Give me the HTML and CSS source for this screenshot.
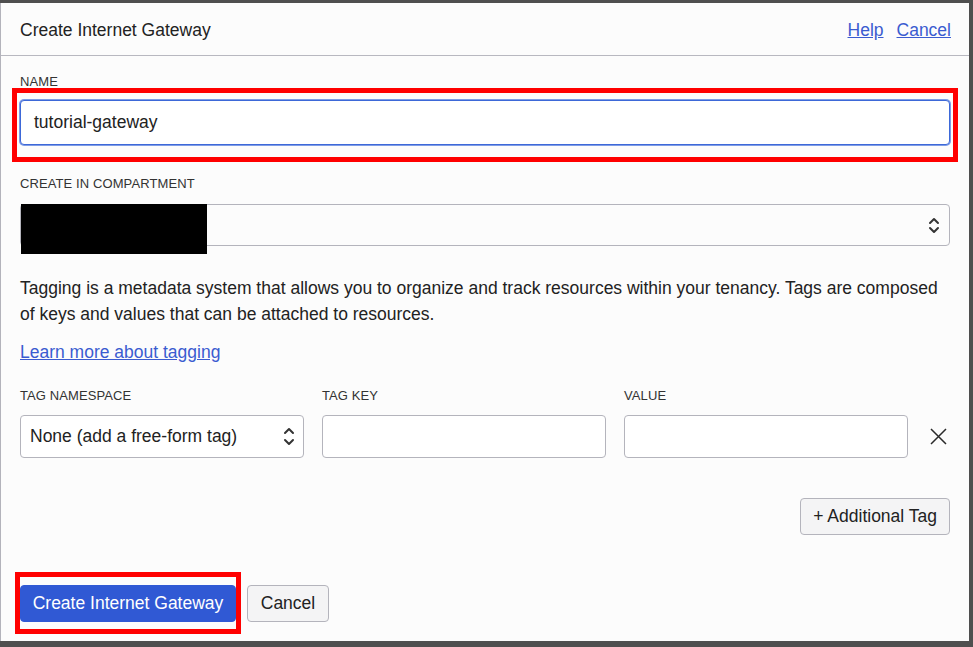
FILE: index.html
```html
<!DOCTYPE html>
<html lang="en">
<head>
<meta charset="utf-8">
<title>Create Internet Gateway</title>
<link rel="stylesheet" href="styles.css">
</head>
<body>
<div class="panel">
  <header class="head">
    <h1 class="title">Create Internet Gateway</h1>
    <nav class="head-links">
      <a href="#" class="link">Help</a>
      <a href="#" class="link">Cancel</a>
    </nav>
  </header>
  <main class="body">
    <div class="label label-name">NAME</div>
    <div class="mark mark-name">
      <div class="input input-focus">tutorial-gateway</div>
    </div>

    <div class="label label-comp">CREATE IN COMPARTMENT</div>
    <div class="select select-comp">
      <span class="redact"></span>
      <svg class="chev" width="12" height="17" viewBox="0 0 12 17"><path d="M2 6 L6 2 L10 6 M2 11 L6 15 L10 11" fill="none" stroke="#333" stroke-width="2" stroke-linecap="round" stroke-linejoin="round"/></svg>
    </div>

    <p class="para">Tagging is a metadata system that allows you to organize and track resources within your tenancy. Tags are composed of keys and values that can be attached to resources.</p>
    <a href="#" class="link learn">Learn more about tagging</a>

    <div class="tags">
      <div class="label">TAG NAMESPACE</div>
      <div class="label">TAG KEY</div>
      <div class="label">VALUE</div>
      <div></div>
      <div class="select select-ns">
        <span class="ns-text">None (add a free-form tag)</span>
        <svg class="chev" width="12" height="19" viewBox="0 0 12 19"><path d="M2 6 L6 2 L10 6 M2 13 L6 17 L10 13" fill="none" stroke="#333" stroke-width="2" stroke-linecap="round" stroke-linejoin="round"/></svg>
      </div>
      <div class="input input-tag"></div>
      <div class="input input-tag"></div>
      <div class="remove">
        <svg width="17" height="17" viewBox="0 0 17 17"><path d="M1 1 L16 16 M16 1 L1 16" fill="none" stroke="#2a2a2a" stroke-width="1.5"/></svg>
      </div>
    </div>

    <div class="add-row">
      <button class="btn btn-add">+ Additional Tag</button>
    </div>

    <footer class="foot">
      <div class="mark mark-btn">
        <button class="btn btn-primary">Create Internet Gateway</button>
      </div>
      <button class="btn">Cancel</button>
    </footer>
  </main>
</div>
</body>
</html>
```

FILE: styles.css
```css
* { box-sizing: border-box; }
html, body { margin: 0; padding: 0; }
body {
  background: #4f4f4f;
  font-family: "Liberation Sans", Arial, sans-serif;
  color: #222;
  width: 973px;
  height: 647px;
  overflow: hidden;
}
.panel {
  margin: 3px 4px 0 0;
  width: 969px;
  height: 638px;
  background: #fcfcfc;
  border-left: 1px solid #b3b3bb;
}
.head {
  height: 53px;
  border-bottom: 1px solid #b8b8c0;
  display: flex;
  align-items: center;
  justify-content: space-between;
  padding: 2px 18px 0 19px;
}
.title {
  margin: 0;
  font-size: 17.5px;
  font-weight: normal;
  color: #222;
}
.head-links { display: flex; gap: 13px; }
.link { color: #3a5bd0; text-decoration: underline; font-size: 17.5px; }
.body { padding: 18px 19px 0 19px; }
.label {
  font-size: 13px;
  line-height: 15px;
  color: #333;
  letter-spacing: 0.1px;
}
.mark {
  border: 5px solid #ff0000;
}
.mark-name {
  margin: -1px -8px 0 -8px;
  padding: 7px 3px 12px 3px;
}
.input {
  background: #fff;
  border: 1px solid #b4b4bc;
  border-radius: 4px;
  height: 43px;
}
.input-focus {
  height: 45px;
  border: 1px solid #3d68d8;
  box-shadow: 0 0 0 1px #7e9ce6;
  font-size: 17.5px;
  display: flex;
  align-items: center;
  padding-left: 13px;
  color: #222;
}
.label-comp { margin-top: 14px; }
.select {
  position: relative;
  border: 1px solid #b4b4bc;
  border-radius: 4px;
  background: #fcfcfc;
  display: flex;
  align-items: center;
  justify-content: space-between;
}
.select-comp { margin-top: 13px; height: 42px; padding-right: 9px; justify-content: flex-end; }
.redact {
  position: absolute;
  left: 0;
  top: -1px;
  width: 186px;
  height: 50px;
  background: #000;
}
.para {
  margin: 29px 0 0 0;
  font-size: 17.5px;
  line-height: 26px;
  color: #222;
}
.learn { display: inline-block; margin-top: 12px; line-height: 26px; }
.tags {
  margin-top: 23px;
  display: grid;
  grid-template-columns: 284px 284px 284px 1fr;
  column-gap: 18px;
  row-gap: 12px;
}
.select-ns {
  height: 43px;
  background: #fff;
  padding: 0 8px 0 9px;
  font-size: 17.5px;
}
.ns-text { color: #222; }
.remove { display: flex; align-items: center; justify-content: flex-end; padding-right: 3px; }
.add-row { display: flex; justify-content: flex-end; margin-top: 40px; }
.btn {
  font-family: "Liberation Sans", Arial, sans-serif;
  font-size: 17.5px;
  height: 37px;
  padding: 0 13px;
  background: #f4f4f5;
  border: 1px solid #b4b4bc;
  border-radius: 4px;
  color: #222;
}
.btn-add { padding: 0 12px; }
.foot {
  margin-top: 37px;
  display: flex;
  align-items: center;
  gap: 6px;
}
.mark-btn { margin-left: -5px; padding: 8px 0 7px 0; }
.btn-primary {
  display: block;
  background: #3059d4;
  border: 1px solid #3059d4;
  color: #fff;
  width: 216px;
  padding: 0;
}
.foot > .btn { width: 82px; padding: 0; }
```
